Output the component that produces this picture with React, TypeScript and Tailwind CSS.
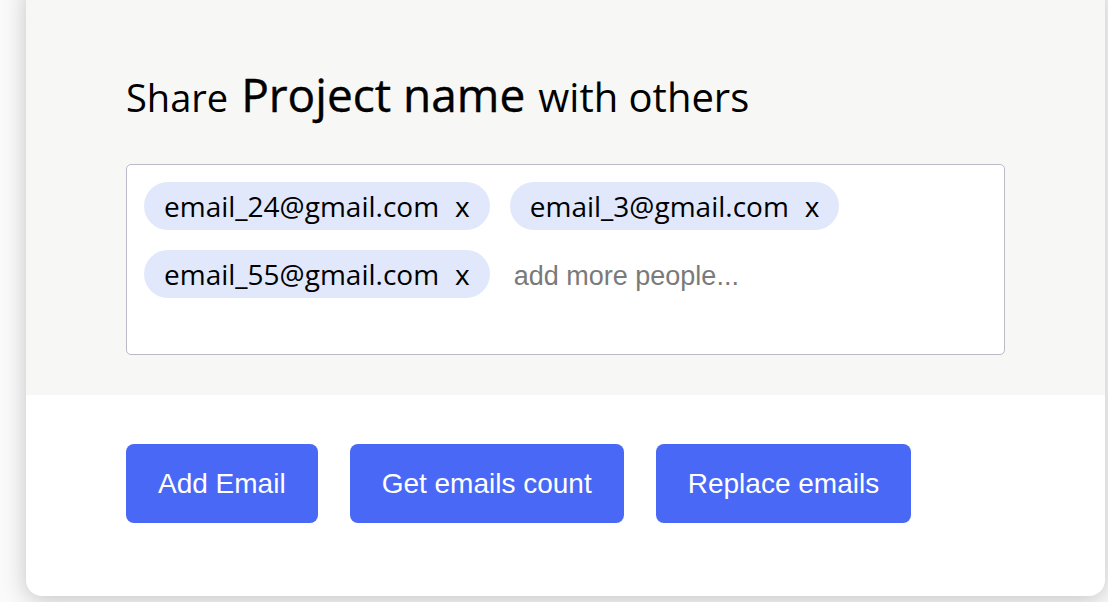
import { useState } from 'react';

const initialEmails = ['email_24@gmail.com', 'email_3@gmail.com', 'email_55@gmail.com'];

export default function App() {
  const [emails, setEmails] = useState(initialEmails);
  const [value, setValue] = useState('');

  const removeEmail = (email: string) => {
    setEmails(emails.filter((e) => e !== email));
  };

  return (
    <div className="h-[602px] w-full overflow-hidden bg-[#fafafa]">
      <div className="ml-[26px] -mt-[20px] w-[1079px] overflow-hidden rounded-[16px] bg-white shadow-[0_4px_24px_rgba(0,0,0,0.22)]">
        <div className="bg-[#f7f7f5] px-[100px] pt-[90px] pb-[40px]">
          <h1 className="mb-[43px] flex items-baseline gap-[13px] text-[40px] leading-[48px] text-black [font-family:'Open_Sans',sans-serif]">
            <span className="text-[38px]">Share</span>
            <span className="text-[46px] font-medium [-webkit-text-stroke:0.4px_black]">Project name</span>
            <span>with others</span>
          </h1>
          <div className="flex h-[191px] flex-wrap content-start gap-[20px] rounded-[5px] border border-[#bbbac8] bg-white p-[17px]">
            {emails.map((email) => (
              <span
                key={email}
                className="flex h-[48px] items-center gap-[16px] rounded-full bg-[#e1e8fb] px-[20px] text-[28px] text-black [font-family:'Open_Sans',sans-serif]"
              >
                {email}
                <button onClick={() => removeEmail(email)} className="leading-none">
                  x
                </button>
              </span>
            ))}
            <input
              value={value}
              onChange={(e) => setValue(e.target.value)}
              placeholder="add more people..."
              className="h-[48px] flex-1 bg-transparent px-[4px] pt-[4px] text-[27px] outline-none placeholder:text-[#7a7a7a] [font-family:'Liberation_Sans',Arial,sans-serif]"
            />
          </div>
        </div>
        <div className="flex gap-[32px] px-[100px] pt-[49px] pb-[73px] [font-family:'Liberation_Sans',Arial,sans-serif]">
          <button className="h-[79px] rounded-[8px] bg-[#4868f5] px-[32px] text-[28px] text-white">Add Email</button>
          <button className="h-[79px] rounded-[8px] bg-[#4868f5] px-[32px] text-[28px] text-white">Get emails count</button>
          <button className="h-[79px] rounded-[8px] bg-[#4868f5] px-[32px] text-[28px] text-white">Replace emails</button>
        </div>
      </div>
    </div>
  );
}
